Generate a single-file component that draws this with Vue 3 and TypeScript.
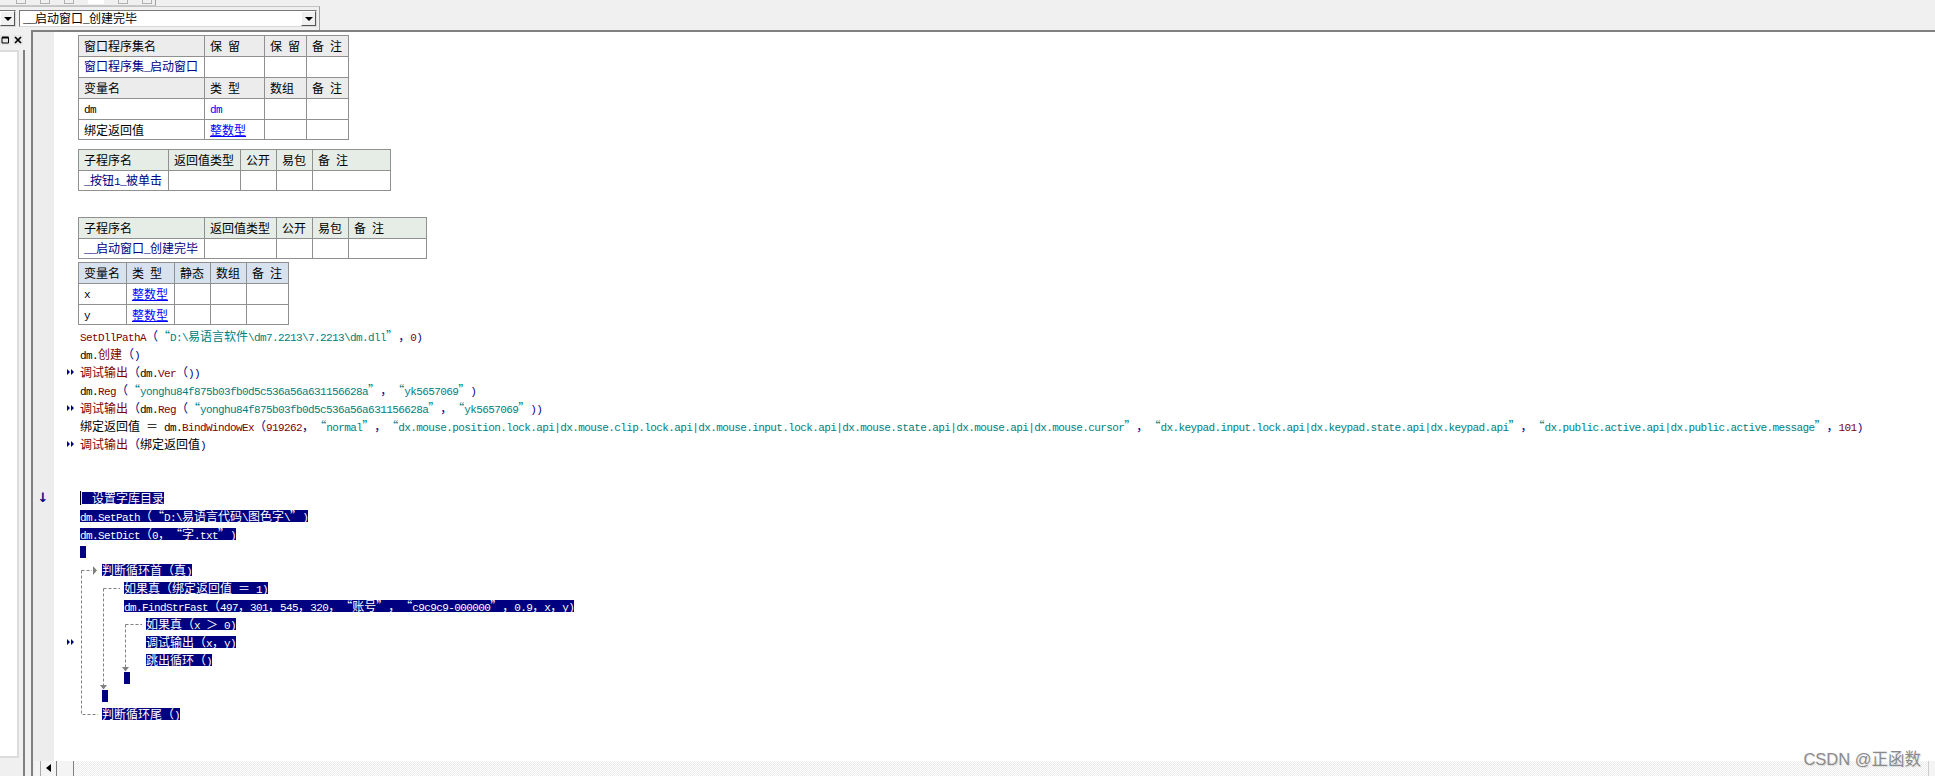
<script setup lang="ts">
type Tok = [string, string?]
interface Row { toks: Tok[]; indent?: number; sel?: boolean; mark?: boolean; down?: boolean }

const n = 'p' // navy punctuation
const s = 's' // teal string
const r = 'r' // dark red
const row = (toks: Tok[], extra: Partial<Row> = {}): Row => ({ toks, ...extra })

const rows: Row[] = [
  row([['SetDllPathA', r], ['（', n], ['“D:\\易语言软件\\dm7.2213\\7.2213\\dm.dll”', s], ['，', n], ['0', r], [')', n]]),
  row([['dm.'], ['创建', r], ['（)', n]]),
  row([['调试输出', r], ['（', n], ['dm.'], ['Ver', r], ['（))', n]], { mark: true }),
  row([['dm.'], ['Reg', r], ['（', n], ['“yonghu84f875b03fb0d5c536a56a631156628a”', s], ['，', n], ['“yk5657069”', s], [')', n]]),
  row([['调试输出', r], ['（', n], ['dm.'], ['Reg', r], ['（', n], ['“yonghu84f875b03fb0d5c536a56a631156628a”', s], ['，', n], ['“yk5657069”', s], ['))', n]], { mark: true }),
  row([['绑定返回值 ＝ dm.'], ['BindWindowEx', r], ['（', n], ['919262', r], ['，', n], ['“normal”', s], ['，', n], ['“dx.mouse.position.lock.api|dx.mouse.clip.lock.api|dx.mouse.input.lock.api|dx.mouse.state.api|dx.mouse.api|dx.mouse.cursor”', s], ['，', n], ['“dx.keypad.input.lock.api|dx.keypad.state.api|dx.keypad.api”', s], ['，', n], ['“dx.public.active.api|dx.public.active.message”', s], ['，', n], ['101', r], [')', n]]),
  row([['调试输出', r], ['（', n], ['绑定返回值'], [')', n]], { mark: true }),
  row([]),
  row([]),
  row([['  设置字库目录']], { sel: true, down: true }),
  row([['dm.SetPath（“D:\\易语言代码\\图色字\\”)']], { sel: true }),
  row([['dm.SetDict（0，“字.txt”)']], { sel: true }),
  row([[' ']], { sel: true }),
  row([['判断循环首（真)']], { sel: true, indent: 1 }),
  row([['如果真（绑定返回值 ＝ 1)']], { sel: true, indent: 2 }),
  row([['dm.FindStrFast（497，301，545，320，“账号”，“c9c9c9-000000”，0.9，x，y)']], { sel: true, indent: 2 }),
  row([['如果真（x ＞ 0)']], { sel: true, indent: 3 }),
  row([['调试输出（x，y)']], { sel: true, indent: 3, mark: true }),
  row([['跳出循环（)']], { sel: true, indent: 3 }),
  row([[' ']], { sel: true, indent: 2 }),
  row([[' ']], { sel: true, indent: 1 }),
  row([['判断循环尾（)']], { sel: true, indent: 1 }),
]

const runs = (t: string) => t.match(/[\x00-\x7f]+|[^\x00-\x7f]+/g) ?? []
const isAscii = (t: string) => /^[\x00-\x7f]/.test(t)
</script>

<template>
  <div class="app">
    <header class="toolbar">
      <div class="tabstrip"><i></i><i></i><i></i><i class="wide"></i><i></i><i></i></div>
      <div class="combos">
        <div class="combo small"><span class="drop"><span class="tri"></span></span></div>
        <div class="combo main"><span class="ctext"><span class="asc">__</span>启动窗口<span class="asc">_</span>创建完毕</span><span class="drop"><span class="tri"></span></span></div>
      </div>
    </header>

    <div class="body">
      <aside class="pane">
        <div class="panehead">
          <span class="pbtn"><svg width="10" height="10" viewBox="0 0 10 10" fill="none" stroke="#000"><path d="M2 2.500h6.500v5.500h-6.500z" /><path d="M2 2.500h6.500" stroke-width="2" /></svg></span>
          <span class="pbtn"><svg width="10" height="10" viewBox="0 0 10 10" fill="none" stroke="#000" stroke-width="1.700"><path d="M2 2l6 6M8 2l-6 6" /></svg></span>
        </div>
        <div class="panebody"><div class="paneinner"></div></div>
      </aside>
      <div class="splitter"></div>

      <main class="editor">
        <div class="view">
          <div class="gutter"></div>
          <div class="content">
            <table class="tb t1">
              <colgroup><col style="width:126px" /><col style="width:60px" /><col style="width:42px" /><col style="width:42px" /></colgroup>
              <tr class="hd"><td>窗口程序集名</td><td>保 留</td><td>保 留</td><td>备 注</td></tr>
              <tr><td class="nm">窗口程序集<span class="asc">_</span>启动窗口</td><td></td><td></td><td></td></tr>
              <tr class="hd"><td>变量名</td><td>类 型</td><td>数组</td><td>备 注</td></tr>
              <tr><td><span class="asc">dm</span></td><td class="ty plain"><span class="asc">dm</span></td><td></td><td></td></tr>
              <tr class="last"><td>绑定返回值</td><td class="ty">整数型</td><td></td><td></td></tr>
            </table>
            <table class="tb t2 green">
              <colgroup><col style="width:90px" /><col style="width:72px" /><col style="width:36px" /><col style="width:36px" /><col style="width:78px" /></colgroup>
              <tr class="hd"><td>子程序名</td><td>返回值类型</td><td>公开</td><td>易包</td><td>备 注</td></tr>
              <tr class="last"><td class="nm"><span class="asc">_</span>按钮<span class="asc">1_</span>被单击</td><td></td><td></td><td></td><td></td></tr>
            </table>
            <table class="tb t3 green">
              <colgroup><col style="width:126px" /><col style="width:72px" /><col style="width:36px" /><col style="width:36px" /><col style="width:78px" /></colgroup>
              <tr class="hd"><td>子程序名</td><td>返回值类型</td><td>公开</td><td>易包</td><td>备 注</td></tr>
              <tr class="last"><td class="nm"><span class="asc">__</span>启动窗口<span class="asc">_</span>创建完毕</td><td></td><td></td><td></td><td></td></tr>
            </table>
            <table class="tb t4 blue">
              <colgroup><col style="width:48px" /><col style="width:48px" /><col style="width:36px" /><col style="width:36px" /><col style="width:42px" /></colgroup>
              <tr class="hd"><td>变量名</td><td>类 型</td><td>静态</td><td>数组</td><td>备 注</td></tr>
              <tr><td><span class="asc">x</span></td><td class="ty">整数型</td><td></td><td></td><td></td></tr>
              <tr class="last"><td><span class="asc">y</span></td><td class="ty">整数型</td><td></td><td></td><td></td></tr>
            </table>

            <div class="code">
              <svg class="flow" width="120" height="396" viewBox="0 0 120 396" fill="none">
                <g stroke="#808080" stroke-dasharray="3 2">
                  <path d="M27.500 243.500V387.500H44" />
                  <path d="M27.500 243.500H38" />
                  <path d="M49.500 261.500V358" />
                  <path d="M49.500 261.500H66" />
                  <path d="M71.500 297.500V340" />
                  <path d="M71.500 297.500H88" />
                </g>
                <g fill="#808080">
                  <path d="M39 239l4 4.500-4 4.500z" />
                  <path d="M46 358h7l-3.500 4.500z" />
                  <path d="M68 340h7l-3.500 4.500z" />
                </g>
              </svg>
              <div v-for="(l, i) in rows" :key="i" class="line" :class="['in' + (l.indent ?? 0), { sel: l.sel }]">
                <span v-if="l.down" class="down">↓</span>
                <span v-if="l.down" class="caret"></span>
                <svg v-if="l.mark" class="mark" width="7" height="6" viewBox="0 0 7 6" fill="#000080"><path d="M0 0l3 3-3 3zM4 0l3 3-3 3z" /></svg>
                <span class="txt">
                  <template v-for="(t, j) in l.toks" :key="j">
                    <span v-for="(c, k) in runs(t[0])" :key="k" :class="[t[1], { asc: isAscii(c) }]">{{ c }}</span>
                  </template>
                </span>
              </div>
            </div>
          </div>
        </div>
        <div class="hbar">
          <span class="hpad"></span>
          <span class="harrow"></span>
          <span class="hthumb"></span>
          <span class="htrack"></span>
          <span class="hend"></span>
        </div>
      </main>
    </div>

    <div class="watermark">CSDN @正函数</div>
  </div>
</template>

<style>
html, body { margin: 0; padding: 0; background: #fff; overflow: hidden; }
</style>

<style scoped>
.app {
  position: relative;
  width: 1935px;
  height: 776px;
  display: flex;
  flex-direction: column;
  overflow: hidden;
  background: #f0f0f0;
  font: 12px/1 "Noto Sans CJK SC", sans-serif;
  color: #000;
  text-spacing-trim: space-all;
  text-autospace: no-autospace;
  font-kerning: none;
}
.toolbar {
  height: 30px;
  flex: none;
  background: #f0f0f0;
  display: flex;
  flex-direction: column;
}
.tabstrip {
  height: 6px;
  width: 156px;
  border-right: 1px solid #a0a0a0;
  border-bottom: 1px solid #c8c8c8;
  box-sizing: border-box;
  display: flex;
  gap: 14px;
  padding-left: 16px;
  overflow: hidden;
}
.tabstrip i { width: 10px; height: 4px; border: 1px solid #b0b0b0; border-top: 0; box-sizing: border-box; }
.tabstrip i.wide { width: 16px; background: #fff; border: 0; }
.combos {
  display: flex;
  gap: 3px;
  width: 320px;
  height: 24px;
  box-sizing: border-box;
  padding-top: 3px;
  border-right: 1px solid #a0a0a0;
  border-top: 1px solid #c4c4c4;
}
.combo {
  height: 17px;
  box-sizing: border-box;
  border: 1px solid #8a8a8a;
  border-color: #777 #d8d8d8 #d8d8d8 #777;
  background: #fff;
  display: flex;
  align-items: center;
  justify-content: space-between;
}
.combo.small { width: 16px; border-left: 0; justify-content: flex-end; }
.combo.main { width: 298px; padding-left: 3px; }
.ctext { font-size: 12px; white-space: pre; }
.drop {
  width: 15px;
  height: 15px;
  flex: none;
  background: #f0f0f0;
  border: 1px solid;
  border-color: #fff #555 #555 #fff;
  box-sizing: border-box;
  display: flex;
  align-items: center;
  justify-content: center;
}
.tri { width: 0; height: 0; border: 4px solid transparent; border-top: 4px solid #000; border-bottom: 0; }
.body { flex: 1; display: flex; min-height: 0; }
.pane { width: 23px; flex: none; display: flex; flex-direction: column; }
.panehead { height: 20px; flex: none; display: flex; gap: 3px; padding-top: 5px; box-sizing: border-box; }
.pbtn { width: 10px; height: 10px; background: #e8e8e8; display: block; }
.pbtn svg { display: block; }
.panebody { flex: 1; padding-bottom: 18px; }
.paneinner {
  width: 19px;
  height: 100%;
  background: #fff;
  border-right: 2px solid #dcdcdc;
  border-top: 2px solid #dcdcdc;
  border-bottom: 2px solid #dcdcdc;
  box-sizing: border-box;
}
.splitter {
  width: 10px;
  flex: none;
  box-sizing: border-box;
  border-left: 2px solid #808080;
  border-right: 2px solid #808080;
  margin-top: 20px;
  background: #f0f0f0;
  box-shadow: 8px -20px 0 0 #808080;
}
.editor {
  flex: 1;
  display: flex;
  flex-direction: column;
  min-width: 0;
  border-top: 2px solid #808080;
  box-sizing: border-box;
}
.view { flex: 1; display: flex; min-height: 0; background: #fff; }
.gutter { width: 21px; flex: none; background: #ededed; }
.content { flex: 1; min-width: 0; padding: 3px 0 0 24px; }
.tb {
  border-collapse: collapse;
  table-layout: fixed;
  background: #fff;
  font-size: 12px;
  word-spacing: 3.300px;
}
.tb td {
  border: 1px solid #909090;
  height: 21px;
  box-sizing: border-box;
  padding: 0 0 0 5px;
  white-space: pre;
  overflow: hidden;
}
.tb .last td { height: 20px; }
.t1 { width: 270px; }
.t2 { width: 312px; margin-top: 9px; }
.t3 { width: 348px; margin-top: 26px; }
.t4 { width: 210px; margin-top: 3px; }
.hd td { background: #ececec; }
.green .hd td { background: #e6ede6; }
.blue .hd td { background: #d8e2ee; }
.nm { color: #000080; }
.ty { color: #0000ff; text-decoration: underline; }
.ty.plain { text-decoration: none; }
.asc { font: 11px/1 "Liberation Mono", monospace; letter-spacing: -0.6px; word-spacing: 0; }
.code { position: relative; margin-top: 2px; margin-left: -24px; }
.flow { position: absolute; left: 0; top: 0; pointer-events: none; }
.line {
  position: relative;
  height: 18px;
  padding-left: 26px;
  display: flex;
  align-items: center;
  white-space: pre;
}
.in1 { padding-left: 48px; }
.in2 { padding-left: 70px; }
.in3 { padding-left: 92px; }
.txt { display: inline-block; line-height: 12px; height: 12px; }
.sel .txt { background: #000080; color: #fff; }
.r { color: #800000; }
.p { color: #000080; }
.s { color: #008080; }
.mark { position: absolute; left: 13px; top: 6px; }
.caret {
  position: absolute;
  left: 26px;
  top: 2px;
  width: 1px;
  height: 14px;
  background: #000;
  box-shadow: 1px 0 0 #f4f0a0;
  z-index: 1;
}
.down {
  position: absolute;
  left: -17px;
  top: 2px;
  width: 12px;
  text-align: center;
  font: bold 13px/14px "DejaVu Sans", sans-serif;
  color: #000080;
}
.hbar { height: 15px; flex: none; display: flex; background: #f0f0f0; }
.hpad { width: 2px; flex: none; }
.harrow {
  width: 22px;
  flex: none;
  background: linear-gradient(to right, #f4f4f4 5px, #aaa 5px, #aaa 6px, #f4f4f4 6px);
  border-right: 1px solid #808080;
  box-sizing: border-box;
  position: relative;
}
.harrow::after {
  content: "";
  position: absolute;
  left: 11px;
  top: 3px;
  border: 4px solid transparent;
  border-right: 5px solid #000;
  border-left: 0;
}
.hthumb { width: 17px; flex: none; background: #f4f4f4; border-right: 1px solid #808080; box-sizing: border-box; }
.htrack {
  flex: 1;
  background: repeating-conic-gradient(#fff 0 25%, #ececec 0 50%) 0 0 / 2px 2px;
}
.hend { width: 7px; flex: none; background: #f4f4f4; border-left: 1px solid #ccc; box-sizing: border-box; }
.watermark {
  position: absolute;
  right: 14px;
  bottom: 7px;
  font: 16.500px/20px "Liberation Sans", "Noto Sans CJK SC", sans-serif;
  color: #8a8a8a;
  text-shadow: 1px 1px 1px rgba(0, 0, 0, 0.12);
}
</style>
